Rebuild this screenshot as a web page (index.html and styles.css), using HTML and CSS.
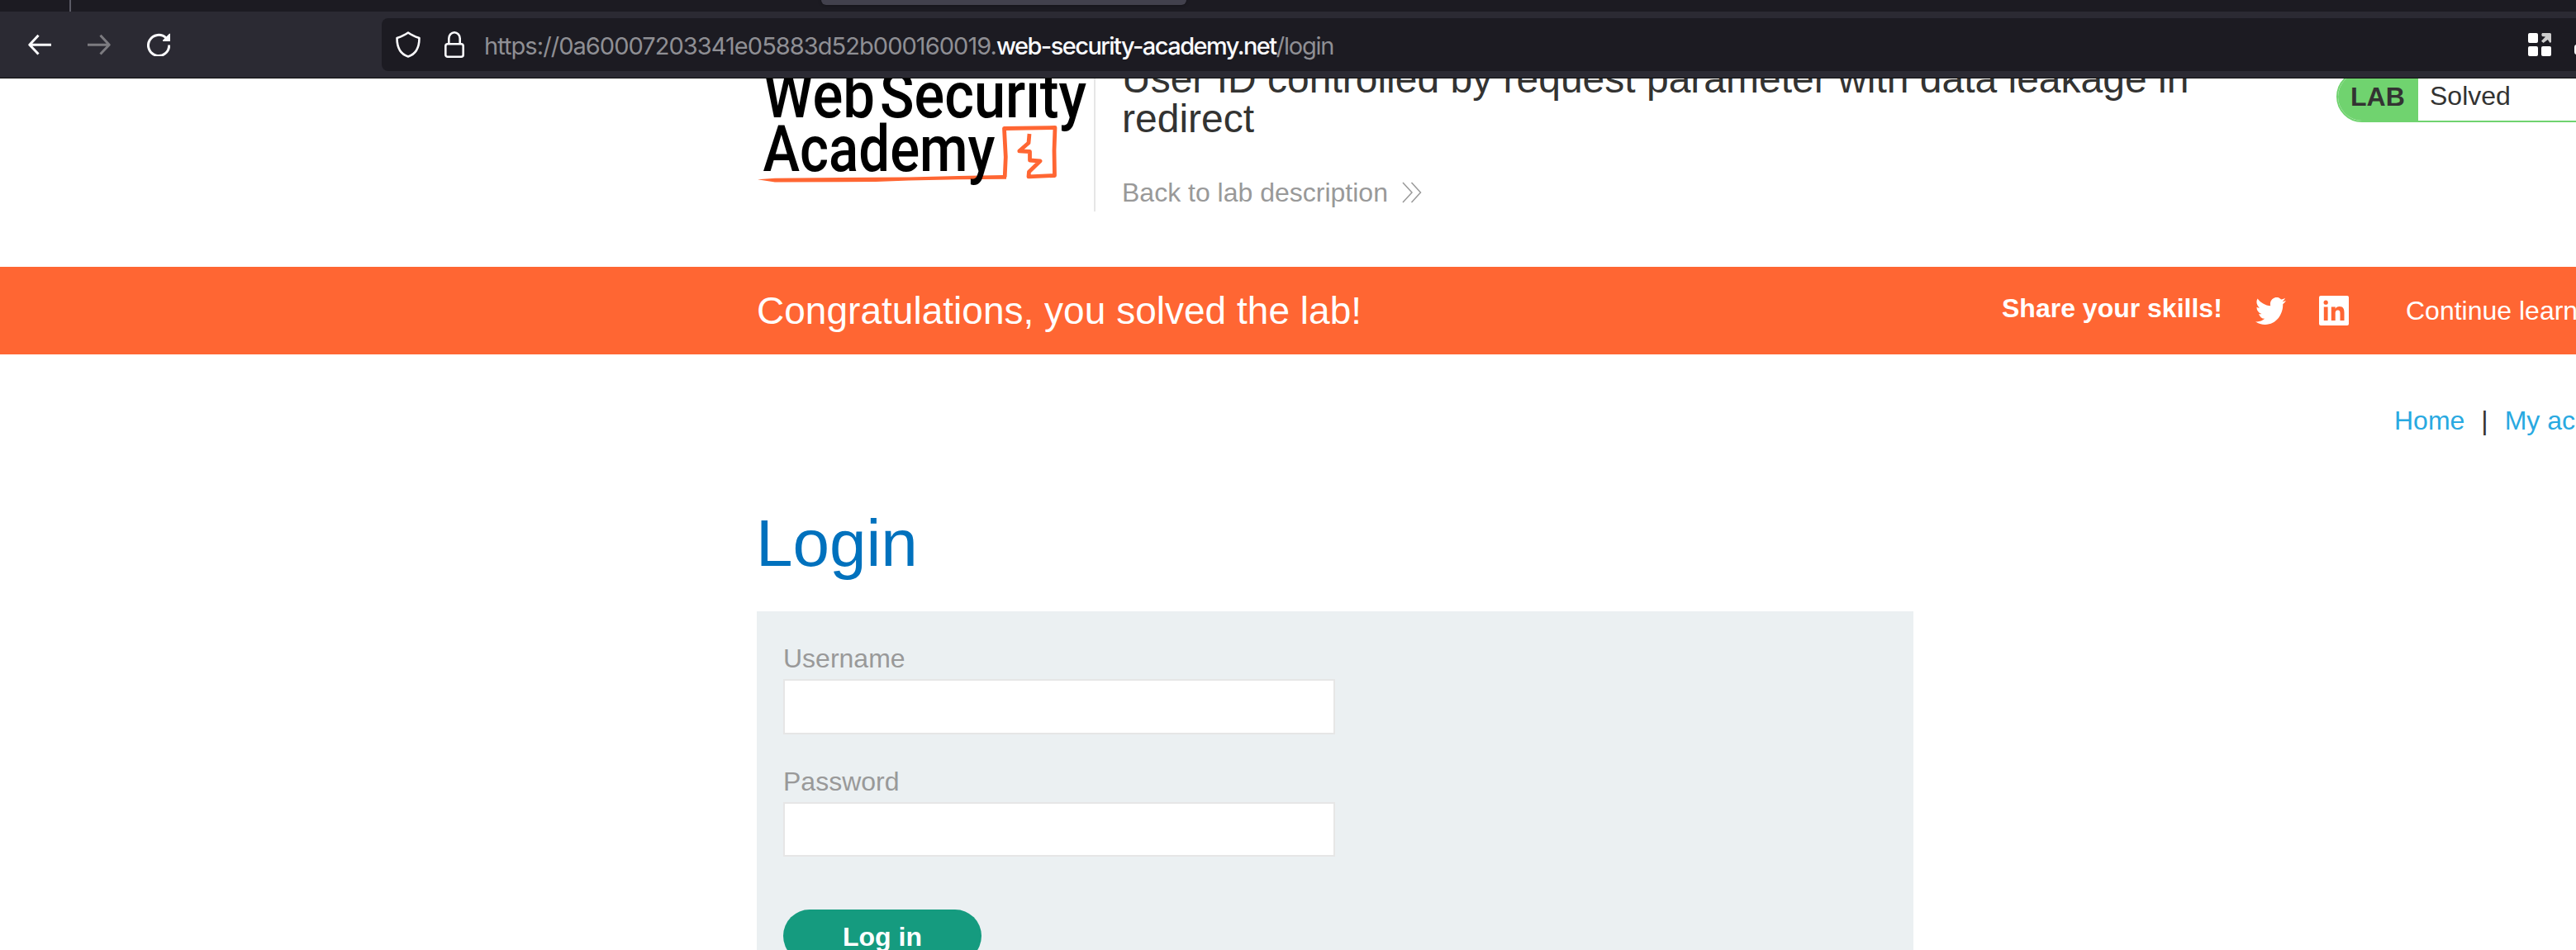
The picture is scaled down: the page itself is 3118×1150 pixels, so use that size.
FILE: index.html
```html
<!DOCTYPE html>
<html lang="en">
<head>
<meta charset="utf-8">
<title>Login</title>
<link rel="stylesheet" href="styles.css">
</head>
<body>
<div class="tabstrip"><span class="tab-divider"></span><span class="tab"></span></div>
<div class="toolbar">
  <div class="nav">
    <svg width="28" height="28" viewBox="0 0 28 28" fill="none" stroke="#fbfbfe" stroke-width="3"><path d="M28 14.3H2M12.5 2.8L1.8 14.3l10.7 11.2" stroke-linejoin="round"/></svg>
    <svg width="28" height="28" viewBox="0 0 28 28" fill="none" stroke="#7c7b80" stroke-width="3"><path d="M0 14.3h26M15.500 2.800l10.700 11.500-10.700 11.200" stroke-linejoin="round"/></svg>
    <svg width="28" height="28" viewBox="0 0 28 28"><path d="M23 6A12.600 12.600 0 1 0 26.700 14.500" fill="none" stroke="#fbfbfe" stroke-width="3"/><path d="M28 0.800V10h-8.500q-1-.5-.3-1.500L27 .8z" fill="#fbfbfe"/></svg>
  </div>
  <div class="urlbar">
    <svg class="shield" width="30" height="32" viewBox="0 0 30 32" fill="none" stroke="#fbfbfe" stroke-width="2.600" stroke-linejoin="round"><path d="M15 1.500c4 3 8 4.700 13.500 6.500C28.500 18 26 27 15 30.500 4 27 1.500 18 1.500 8 7 6.200 11 4.500 15 1.500z"/></svg>
    <svg class="lock" width="24" height="32" viewBox="0 0 24 32" fill="none" stroke="#fbfbfe" stroke-width="2.600"><rect x="1.300" y="15.300" width="21.400" height="15.400" rx="2.500"/><path d="M5.300 15V8.500a6.700 7.200 0 0 1 13.400 0V15"/></svg>
    <span class="url"><span class="u1">https://0a60007203341e05883d52b000160019.</span><span class="u2">web-security-academy.net</span><span class="u3">/login</span></span>
    <svg class="apps" width="58" height="28" viewBox="0 0 58 28"><g fill="#fff"><rect width="12" height="12" rx="2"/><rect y="16" width="12" height="12" rx="2"/><rect x="16" y="16" width="12" height="12" rx="2"/><rect x="56" y="14" width="10" height="12" rx="3"/></g><path d="M17 0h9.500q1.500 0 1.500 1.500V11l-1.500 1-2.700-4L18.500 12 16 9.800l5-5.300-4-.5-.8-2z" fill="#ccc"/></svg>
  </div>
</div>
<main class="viewport">
  <header class="head">
    <svg class="logo" width="408" height="161" viewBox="916 95 408 161">
      <path d="M917 217.300L938 215.700 1100 214.500 1160 213 1214 212 1218 213V216.700L1160 217.300 1100 218.500 1060 220 938 220.500z" fill="#ff6633"/>
      <path d="M1216.200 214.500L1217.300 190 1215.500 155.500 1277 154.500 1276 182 1276.500 212.500 1245 213.800 1245.500 208 1259 195 1246.500 194 1246.500 183.500 1233.800 182.800 1245 173 1246 162" fill="none" stroke="#ff6633" stroke-width="4.800" stroke-linejoin="round"/>
      <g class="logo-text">
        <text x="924" y="141.500" textLength="135" lengthAdjust="spacingAndGlyphs">Web</text>
        <text x="1065" y="141.500" textLength="250" lengthAdjust="spacingAndGlyphs">Security</text>
        <text x="923.500" y="206.500" textLength="281" lengthAdjust="spacingAndGlyphs">Academy</text>
      </g>
    </svg>
    <div class="title">
      <h2>User ID controlled by request parameter with data leakage in<br>redirect</h2>
      <a class="back">Back to lab description<svg width="24" height="26" viewBox="0 0 24 26" fill="none" stroke="#999" stroke-width="1.500"><path d="M1 1l11 12L1 25M11.500 1l11 12-11 12"/></svg></a>
    </div>
    <div class="status"><span class="lab">LAB</span><span class="solved">Solved</span></div>
  </header>
  <section class="banner">
    <span class="congrats">Congratulations, you solved the lab!</span>
    <span class="share">Share your skills!</span>
    <svg class="tw" width="37" height="33" viewBox="0 2.250 24 19.500" preserveAspectRatio="none" fill="#fff"><path d="M23.950 4.570a10 10 0 0 1-2.820.770 4.960 4.960 0 0 0 2.160-2.720c-.950.550-2 .950-3.120 1.180a4.920 4.920 0 0 0-8.380 4.480C7.690 8.090 4.070 6.130 1.640 3.160a4.920 4.920 0 0 0 1.520 6.570 4.900 4.900 0 0 1-2.230-.610v.060a4.920 4.920 0 0 0 3.950 4.830 5 5 0 0 1-2.210.080 4.940 4.940 0 0 0 4.600 3.420A9.870 9.870 0 0 1 0 19.540a13.990 13.990 0 0 0 7.550 2.210c9.050 0 14-7.500 14-13.980 0-.210 0-.420-.020-.630a9.940 9.940 0 0 0 2.460-2.550z"/></svg>
    <svg class="li" width="36" height="36" viewBox="0 0 36 36"><rect width="36" height="36" rx="2" fill="#fff"/><g fill="#ff6633"><circle cx="8.200" cy="8.200" r="2.600"/><path d="M5.800 13.500h4.800v16.500H5.800zM14.800 13.500h4.900v2.300c.8-1.500 2.600-2.700 5-2.700 4.800 0 5.800 3.400 5.800 7.500v9.400h-5v-8.300c0-2 0-4.300-2.700-4.300s-3.100 2-3.100 4.200v8.400h-4.900z"/></g></svg>
    <span class="continue">Continue learning</span>
  </section>
  <nav class="links"><a>Home</a><span class="bar">|</span><a>My account</a></nav>
  <h1>Login</h1>
  <form class="panel">
    <label for="u">Username</label>
    <input id="u" class="first" type="text">
    <label for="p">Password</label>
    <input id="p" class="second" type="password">
    <button type="button">Log in</button>
  </form>
</main>
</body>
</html>
```

FILE: styles.css
```css
* { box-sizing: border-box; }
html, body { margin: 0; height: 1150px; overflow: hidden; }
body { width: 3118px; background: #fff; color: #333332; font: 32px/36px "Liberation Sans", Arial, sans-serif; white-space: nowrap; }
svg { display: block; flex: none; }
.tabstrip { display: flex; height: 14px; background: #1c1b22; }
.tab-divider { width: 2px; margin-left: 84px; background: #5b5b66; }
.tab { width: 442px; height: 6px; margin-left: 908px; background: #42414d; border-radius: 0 0 8px 8px; box-shadow: 0 0 4px rgba(0,0,0,.4); }
.toolbar { display: flex; align-items: flex-start; height: 81px; background: #2b2a33; border-bottom: 1px solid #0c0c0d; }
.nav { display: flex; gap: 44px; width: 462px; padding: 26px 0 0 34px; }
.urlbar { display: flex; align-items: flex-start; flex: 1; height: 64px; margin-top: 8px; padding: 16px 0 0 17px; background: #1c1b22; border-radius: 8px 0 0 8px; }
.lock { margin-left: 29px; }
.url { margin: 0 0 0 24px; width: 1100px; font: 29px/36px Inter, sans-serif; letter-spacing: -.95px; color: #8f8f94; }
.u2 { color: #fbfbfe; font-weight: 500; letter-spacing: -1.55px; }
.u3 { letter-spacing: -1.2px; }
.apps { margin: 2px 0 0 auto; }
.viewport { height: 1055px; overflow: hidden; }
.head { display: flex; height: 228px; padding-left: 916px; }
.title { flex: none; width: 1470px; height: 161px; padding-left: 32px; border-left: 2px solid #e6e6e6; }
h2 { margin: -23px 0 0; font-size: 48px; line-height: 48px; font-weight: 400; }
.back { display: flex; gap: 17px; margin-top: 47px; color: #999; }
.back svg { margin-top: 5px; }
.logo-text { font: 500 77px Roboto, sans-serif; fill: #000; }
.status { display: flex; flex: none; width: 400px; height: 62px; margin: -9px 0 0 34px; border: 2px solid #70d36f; border-radius: 31px; overflow: hidden; line-height: 40px; }
.lab { width: 97px; padding: 9px 0 0 15px; background: #70d36f; font-weight: 700; }
.solved { padding: 8px 0 0 14px; }
.banner { display: flex; height: 106px; padding-left: 916px; background: #ff6633; color: #fff; }
.banner > * { flex: none; }
.congrats { width: 1507px; padding-top: 26px; font-size: 46px; line-height: 54px; letter-spacing: .02px; }
.share { width: 307px; padding-top: 32px; font-weight: 700; }
.tw { margin-top: 37px; }
.li { margin: 35px 0 0 40px; }
.continue { margin: 35px 0 0 69px; }
.links { display: flex; gap: 20px; padding: 62px 0 0 2898px; height: 168px; color: #29a9e1; }
.bar { color: #333332; }
h1 { margin: 0 0 0 915px; height: 143px; padding-top: 16px; font-size: 80px; line-height: 90px; font-weight: 400; color: #0071bd; }
.panel { width: 1400px; height: 500px; margin-left: 916px; padding: 39px 32px; background: #ebf0f2; color: #999; }
label { display: block; height: 43px; }
input { display: block; width: 668px; padding: 0; border: 2px solid #e6e6e6; border-radius: 0; background: #fff; }
.first { height: 67px; margin: 0 0 39px; }
.second { height: 66px; margin: 0 0 64px; }
button { width: 240px; height: 64px; border: 0; border-radius: 32px; padding: 0; background: #159b7f; color: #fff; font: 700 32px/66px "Liberation Sans", Arial, sans-serif; }
```
